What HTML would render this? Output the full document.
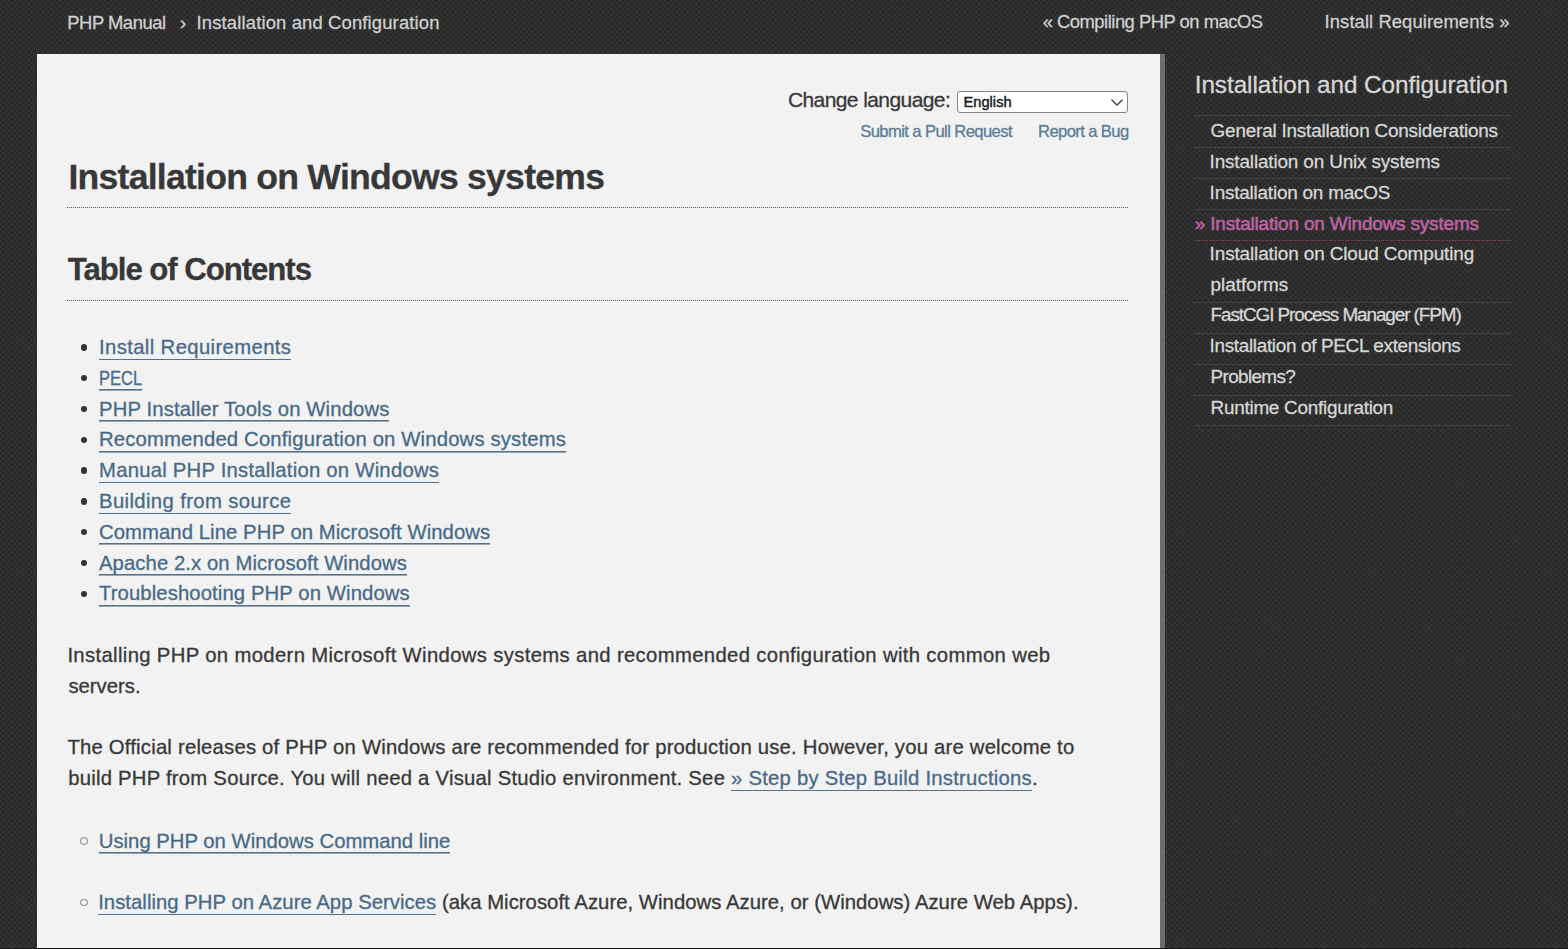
<!DOCTYPE html><html><head><meta charset="utf-8"><title>Installation on Windows systems</title><style>
*{margin:0;padding:0;box-sizing:border-box}
html,body{width:1568px;height:949px;overflow:hidden}
body{position:relative;background-color:#2a2a2a;background-image:repeating-linear-gradient(45deg,rgba(255,255,255,0.022) 0 2px,rgba(0,0,0,0.03) 2px 4px),repeating-linear-gradient(-45deg,rgba(255,255,255,0.022) 0 2px,rgba(0,0,0,0.03) 2px 4px);font-family:"Liberation Sans",sans-serif;}
.t{position:absolute;white-space:nowrap;line-height:1;-webkit-text-stroke:0.3px currentColor}
.t a{color:#486a88;text-decoration:none;background:linear-gradient(#56728a,#56728a) 0 100%/100% 1.6px no-repeat;padding-bottom:2.2px}
.t.lk{color:#486a88}
.t.lk span.in{background:linear-gradient(#56728a,#56728a) 0 100%/100% 1.6px no-repeat;padding-bottom:2.2px}
.mk{display:inline-block;width:0;height:0;vertical-align:baseline}
#content{position:absolute;left:37px;top:54px;width:1123px;height:894px;background:#f2f2f2}
#rborder{position:absolute;left:1160px;top:54px;width:5px;height:894px;background:#6d6d6d}
#bstrip{position:absolute;left:0;top:948px;width:1568px;height:1px;background:#161616}
.dl{position:absolute;height:1px;background-image:linear-gradient(to right,#555 50%,transparent 50%);background-size:2px 1px}
.sl{position:absolute;height:1px;background-image:linear-gradient(to right,#535353 50%,transparent 50%);background-size:2px 1px}
.bul{position:absolute;width:6.6px;height:6.6px;border-radius:50%;background:#333}
.cir{position:absolute;width:7.6px;height:7.6px;border-radius:50%;border:1.4px solid #7a7a7a}
#sel{position:absolute;left:956.5px;top:90.7px;width:171.6px;height:22.6px;background:#fff;border:1.5px solid #858585;border-radius:3px}
body.measure .deco, body.measure #sel{visibility:hidden}
body.measure .t a, body.measure .t.lk span.in{background:none}
</style></head>
<body class="">
<div id="content"></div><div id="rborder"></div><div id="bstrip"></div>
<div id="sel"><svg class="deco" style="position:absolute;left:152px;top:6.5px" width="14" height="9" viewBox="0 0 14 9"><path d="M1.5 1.8 L7 7 L12.5 1.8" fill="none" stroke="#444" stroke-width="1.4"/></svg></div>
<div class="dl deco" style="left:67px;top:207px;width:1061px"></div>
<div class="dl deco" style="left:67px;top:299.5px;width:1061px"></div>
<div class="sl deco" style="left:1195px;top:115px;width:315px"></div>
<div class="sl deco" style="left:1195px;top:147px;width:315px"></div>
<div class="sl deco" style="left:1195px;top:178px;width:315px"></div>
<div class="sl deco" style="left:1195px;top:209px;width:315px"></div>
<div class="sl deco" style="left:1195px;top:302px;width:315px"></div>
<div class="sl deco" style="left:1195px;top:332.5px;width:315px"></div>
<div class="sl deco" style="left:1195px;top:363.5px;width:315px"></div>
<div class="sl deco" style="left:1195px;top:394.5px;width:315px"></div>
<div class="sl deco" style="left:1195px;top:425px;width:315px"></div>
<div class="sl deco" style="left:1195px;top:239.5px;width:315px;background-image:linear-gradient(to right,#7e4a70 50%,transparent 50%)"></div>
<div class="bul deco" style="left:80.8px;top:344.1px"></div>
<div class="bul deco" style="left:80.8px;top:374.9px"></div>
<div class="bul deco" style="left:80.8px;top:405.7px"></div>
<div class="bul deco" style="left:80.8px;top:436.5px"></div>
<div class="bul deco" style="left:80.8px;top:467.3px"></div>
<div class="bul deco" style="left:80.8px;top:498.1px"></div>
<div class="bul deco" style="left:80.8px;top:528.9px"></div>
<div class="bul deco" style="left:80.8px;top:559.7px"></div>
<div class="bul deco" style="left:80.8px;top:590.5px"></div>
<div class="cir deco" style="left:80.3px;top:837.0px"></div>
<div class="cir deco" style="left:80.3px;top:898.6px"></div>
<div class="t" id="t1" style="left:67.30px;top:13.91px;font-size:18.40px;font-weight:400;color:#cfcfcf;letter-spacing:-0.467px;"><span class="in">PHP Manual</span><span class="mk"></span></div>
<div class="t" id="t2" style="left:180.00px;top:13.91px;font-size:18.40px;font-weight:400;color:#cfcfcf;letter-spacing:0.000px;"><span class="in">&rsaquo;</span><span class="mk"></span></div>
<div class="t" id="t3" style="left:196.60px;top:13.91px;font-size:18.40px;font-weight:400;color:#cfcfcf;letter-spacing:0.159px;"><span class="in">Installation and Configuration</span><span class="mk"></span></div>
<div class="t" id="t4" style="left:1042.70px;top:13.41px;font-size:18.40px;font-weight:400;color:#cfcfcf;letter-spacing:-0.496px;"><span class="in">&laquo; Compiling PHP on macOS</span><span class="mk"></span></div>
<div class="t" id="t5" style="left:1324.60px;top:13.41px;font-size:18.40px;font-weight:400;color:#cfcfcf;letter-spacing:0.086px;"><span class="in">Install Requirements &raquo;</span><span class="mk"></span></div>
<div class="t" id="c1" style="left:787.90px;top:89.40px;font-size:21.00px;font-weight:400;color:#383838;letter-spacing:-0.587px;"><span class="in">Change language:</span><span class="mk"></span></div>
<div class="t" id="c2" style="left:963.60px;top:95.20px;font-size:14.60px;font-weight:400;color:#1a1a1a;letter-spacing:0.017px;-webkit-text-stroke:0.45px currentColor;"><span class="in">English</span><span class="mk"></span></div>
<div class="t" id="c3" style="left:860.20px;top:123.60px;font-size:16.60px;font-weight:400;color:#5a7d99;letter-spacing:-0.590px;"><span class="in">Submit a Pull Request</span><span class="mk"></span></div>
<div class="t" id="c4" style="left:1038.00px;top:123.60px;font-size:16.60px;font-weight:400;color:#5a7d99;letter-spacing:-0.600px;"><span class="in">Report a Bug</span><span class="mk"></span></div>
<div class="t" id="h1" style="left:68.40px;top:159.71px;font-size:35.60px;font-weight:700;color:#383838;letter-spacing:-0.753px;"><span class="in">Installation on Windows systems</span><span class="mk"></span></div>
<div class="t" id="h2" style="left:67.80px;top:254.20px;font-size:31.20px;font-weight:700;color:#383838;letter-spacing:-1.050px;"><span class="in">Table of Contents</span><span class="mk"></span></div>
<div class="t lk" id="l1" style="left:99.00px;top:337.00px;font-size:20.30px;font-weight:400;color:#486a88;letter-spacing:0.376px;"><span class="in">Install Requirements</span><span class="mk"></span></div>
<div class="t lk" id="l2" style="left:99.00px;top:367.81px;font-size:20.30px;font-weight:400;color:#486a88;letter-spacing:0.000px;transform:scaleX(0.8135);transform-origin:0 0;"><span class="in">PECL</span><span class="mk"></span></div>
<div class="t lk" id="l3" style="left:99.00px;top:398.60px;font-size:20.30px;font-weight:400;color:#486a88;letter-spacing:0.126px;"><span class="in">PHP Installer Tools on Windows</span><span class="mk"></span></div>
<div class="t lk" id="l4" style="left:99.00px;top:429.41px;font-size:20.30px;font-weight:400;color:#486a88;letter-spacing:0.161px;"><span class="in">Recommended Configuration on Windows systems</span><span class="mk"></span></div>
<div class="t lk" id="l5" style="left:99.00px;top:460.21px;font-size:20.30px;font-weight:400;color:#486a88;letter-spacing:0.235px;"><span class="in">Manual PHP Installation on Windows</span><span class="mk"></span></div>
<div class="t lk" id="l6" style="left:99.00px;top:491.00px;font-size:20.30px;font-weight:400;color:#486a88;letter-spacing:0.376px;"><span class="in">Building from source</span><span class="mk"></span></div>
<div class="t lk" id="l7" style="left:99.00px;top:521.81px;font-size:20.30px;font-weight:400;color:#486a88;letter-spacing:0.073px;"><span class="in">Command Line PHP on Microsoft Windows</span><span class="mk"></span></div>
<div class="t lk" id="l8" style="left:99.00px;top:552.60px;font-size:20.30px;font-weight:400;color:#486a88;letter-spacing:0.081px;"><span class="in">Apache 2.x on Microsoft Windows</span><span class="mk"></span></div>
<div class="t lk" id="l9" style="left:99.00px;top:583.41px;font-size:20.30px;font-weight:400;color:#486a88;letter-spacing:0.101px;"><span class="in">Troubleshooting PHP on Windows</span><span class="mk"></span></div>
<div class="t" id="p1" style="left:67.40px;top:645.10px;font-size:20.30px;font-weight:400;color:#383838;letter-spacing:0.345px;"><span class="in">Installing PHP on modern Microsoft Windows systems and recommended configuration with common web</span><span class="mk"></span></div>
<div class="t" id="p2" style="left:68.40px;top:676.10px;font-size:20.30px;font-weight:400;color:#383838;letter-spacing:0.000px;"><span class="in">servers.</span><span class="mk"></span></div>
<div class="t" id="p3" style="left:67.40px;top:737.41px;font-size:20.30px;font-weight:400;color:#383838;letter-spacing:0.208px;"><span class="in">The Official releases of PHP on Windows are recommended for production use. However, you are welcome to</span><span class="mk"></span></div>
<div class="t" id="p4" style="left:68.20px;top:768.00px;font-size:20.30px;font-weight:400;color:#383838;letter-spacing:0.235px;"><span class="in">build PHP from Source. You will need a Visual Studio environment. See <a>&raquo; Step by Step Build Instructions</a>.</span><span class="mk"></span></div>
<div class="t" id="o1" style="left:98.81px;top:830.50px;font-size:20.30px;font-weight:400;color:#383838;letter-spacing:0.006px;"><span class="in"><a>Using PHP on Windows Command line</a></span><span class="mk"></span></div>
<div class="t" id="o2" style="left:98.20px;top:892.10px;font-size:20.30px;font-weight:400;color:#383838;letter-spacing:0.037px;"><span class="in"><a>Installing PHP on Azure App Services</a> (aka Microsoft Azure, Windows Azure, or (Windows) Azure Web Apps).</span><span class="mk"></span></div>
<div class="t" id="s0" style="left:1194.70px;top:73.00px;font-size:24.30px;font-weight:400;color:#d6d6d6;letter-spacing:-0.048px;"><span class="in">Installation and Configuration</span><span class="mk"></span></div>
<div class="t" id="s1" style="left:1210.60px;top:122.00px;font-size:18.90px;font-weight:400;color:#d6d6d6;letter-spacing:-0.194px;"><span class="in">General Installation Considerations</span><span class="mk"></span></div>
<div class="t" id="s2" style="left:1209.60px;top:153.00px;font-size:18.90px;font-weight:400;color:#d6d6d6;letter-spacing:-0.141px;"><span class="in">Installation on Unix systems</span><span class="mk"></span></div>
<div class="t" id="s3" style="left:1209.60px;top:184.00px;font-size:18.90px;font-weight:400;color:#d6d6d6;letter-spacing:-0.200px;"><span class="in">Installation on macOS</span><span class="mk"></span></div>
<div class="t" id="s4" style="left:1194.80px;top:215.00px;font-size:18.90px;font-weight:400;color:#bb64a2;letter-spacing:-0.144px;-webkit-text-stroke:0.55px currentColor;"><span class="in">&raquo; Installation on Windows systems</span><span class="mk"></span></div>
<div class="t" id="s5" style="left:1209.60px;top:245.00px;font-size:18.90px;font-weight:400;color:#d6d6d6;letter-spacing:-0.107px;"><span class="in">Installation on Cloud Computing</span><span class="mk"></span></div>
<div class="t" id="s6" style="left:1210.60px;top:276.00px;font-size:18.90px;font-weight:400;color:#d6d6d6;letter-spacing:0.000px;"><span class="in">platforms</span><span class="mk"></span></div>
<div class="t" id="s7" style="left:1210.60px;top:306.20px;font-size:18.90px;font-weight:400;color:#d6d6d6;letter-spacing:-1.079px;"><span class="in">FastCGI Process Manager (FPM)</span><span class="mk"></span></div>
<div class="t" id="s8" style="left:1209.60px;top:337.41px;font-size:18.90px;font-weight:400;color:#d6d6d6;letter-spacing:-0.320px;"><span class="in">Installation of PECL extensions</span><span class="mk"></span></div>
<div class="t" id="s9" style="left:1210.60px;top:368.20px;font-size:18.90px;font-weight:400;color:#d6d6d6;letter-spacing:-0.650px;"><span class="in">Problems?</span><span class="mk"></span></div>
<div class="t" id="s10" style="left:1210.60px;top:398.70px;font-size:18.90px;font-weight:400;color:#d6d6d6;letter-spacing:-0.260px;"><span class="in">Runtime Configuration</span><span class="mk"></span></div>
</body></html>
